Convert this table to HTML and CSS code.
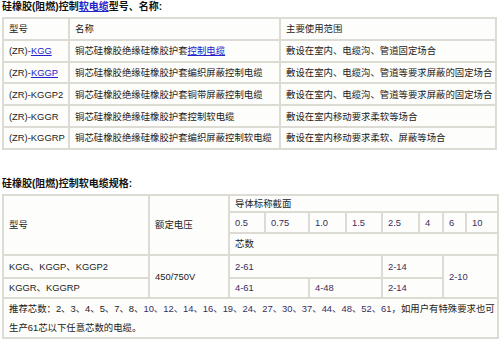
FILE: index.html
```html
<!DOCTYPE html>
<html>
<head>
<meta charset="utf-8">
<link rel="stylesheet" href="styles.css">
</head>
<body>
<div class="page">
  <h2 class="title">硅橡胶(阻燃)控制<a href="#">软电缆</a>型号、名称:</h2>
  <table class="grid t1">
    <colgroup><col class="k1"><col class="k2"><col></colgroup>
    <tr><td>型号</td><td>名称</td><td>主要使用范围</td></tr>
    <tr><td>(ZR)-<a href="#">KGG</a></td><td>铜芯硅橡胶绝缘硅橡胶护套<a href="#">控制电缆</a></td><td>敷设在室内、电缆沟、管道固定场合</td></tr>
    <tr><td>(ZR)-<a href="#">KGGP</a></td><td>铜芯硅橡胶绝缘硅橡胶护套编织屏蔽控制电缆</td><td>敷设在室内、电缆沟、管道等要求屏蔽的固定场合</td></tr>
    <tr><td>(ZR)-KGGP2</td><td>铜芯硅橡胶绝缘硅橡胶护套铜带屏蔽控制电缆</td><td>敷设在室内、电缆沟、管道等要求屏蔽的固定场合</td></tr>
    <tr><td>(ZR)-KGGR</td><td>铜芯硅橡胶绝缘硅橡胶护套控制软电缆</td><td>敷设在室内移动要求柔软等场合</td></tr>
    <tr><td>(ZR)-KGGRP</td><td>铜芯硅橡胶绝缘硅橡胶护套编织屏蔽控制软电缆</td><td>敷设在室内移动要求柔软、屏蔽等场合</td></tr>
  </table>

  <h2 class="title title2">硅橡胶(阻燃)控制软电缆规格:</h2>
  <table class="grid t2">
    <colgroup>
      <col class="m1"><col class="m2">
      <col class="s1"><col class="s2"><col class="s3"><col class="s4">
      <col class="s5"><col class="s6"><col class="s7"><col class="s8">
    </colgroup>
    <tr class="r1">
      <td rowspan="3">型号</td>
      <td rowspan="3">额定电压</td>
      <td colspan="8">导体标称截面</td>
    </tr>
    <tr class="r2">
      <td class="num">0.5</td><td class="num">0.75</td><td class="num">1.0</td><td class="num">1.5</td>
      <td class="num">2.5</td><td class="num">4</td><td class="num">6</td><td class="num">10</td>
    </tr>
    <tr class="r3"><td colspan="8">芯数</td></tr>
    <tr class="r4">
      <td>KGG、KGGP、KGGP2</td>
      <td rowspan="2">450/750V</td>
      <td colspan="4" class="num">2-61</td>
      <td colspan="2" class="num">2-14</td>
      <td colspan="2" rowspan="2" class="num">2-10</td>
    </tr>
    <tr class="r5">
      <td>KGGR、KGGRP</td>
      <td colspan="2" class="num">4-61</td>
      <td colspan="2" class="num">4-48</td>
      <td colspan="2" class="num">2-14</td>
    </tr>
    <tr class="r6">
      <td colspan="10" class="note">推荐芯数：2、3、4、5、7、8、<span class="num">10、12、14、16、19、24、27、30、37、44、48、52、61</span>，如用户有特殊要求也可生产61芯以下任意芯数的电缆。</td>
    </tr>
  </table>
</div>
</body>
</html>
```

FILE: styles.css
```css
html, body {
  margin: 0;
  padding: 0;
  background: #ffffff;
}
.page {
  padding: 0 3px 0 2px;
  font-family: "Liberation Sans", "Noto Sans CJK SC", sans-serif;
  font-size: 9.4px;
  color: #222222;
}
.title {
  margin: 0;
  font-size: 10px;
  font-weight: bold;
  color: #111111;
  line-height: 14px;
  height: 17px;
}
.title a, .grid a {
  color: #2222cc;
  text-decoration: underline;
  font-weight: inherit;
}
.title2 {
  margin-top: 26px;
  height: 18px;
  line-height: 16px;
}
.grid {
  width: 100%;
  border-collapse: collapse;
  table-layout: fixed;
  border: 2px solid #dcdcd4;
  background: #fdfdfb;
}
.grid td {
  border: 2px solid #dcdcd4;
  padding: 0 0 0 5px;
  white-space: nowrap;
  overflow: hidden;
  vertical-align: middle;
  line-height: 13px;
}
.t1 td {
  height: 19.8px;
}
.t1 .k1 { width: 66px; }
.t1 .k2 { width: 211px; }
.t2 .m1 { width: 146px; }
.t2 .m2 { width: 80px; }
.t2 .s1 { width: 36px; }
.t2 .s2 { width: 44px; }
.t2 .s3 { width: 37px; }
.t2 .s4 { width: 36px; }
.t2 .s5 { width: 37px; }
.t2 .s6 { width: 24px; }
.t2 .s7 { width: 23px; }
.t2 .s8 { width: 32px; }
.t2 .r1 td { height: 15px; }
.t2 .r2 td { height: 19px; }
.t2 .r3 td { height: 20px; }
.t2 .r4 td { height: 21px; }
.t2 .r5 td { height: 18px; }
.t2 .r6 td { height: 37px; }
.num {
  color: #3a2e5e;
}
.t2 td.note {
  white-space: normal;
  line-height: 19px;
  padding-right: 2px;
}
```
